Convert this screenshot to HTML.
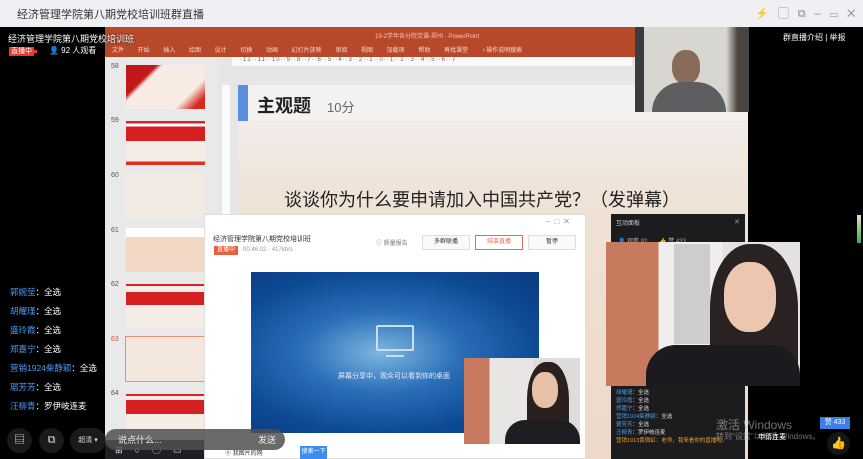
<!DOCTYPE html>
<html><head><meta charset="utf-8"><style>
*{margin:0;padding:0;box-sizing:border-box}
body{width:863px;height:459px;overflow:hidden;position:relative;background:#000;font-family:"Liberation Sans","Noto Sans CJK SC",sans-serif}
.a{position:absolute}
.t{white-space:nowrap}
</style></head><body>
<!-- top bar -->
<div class="a" style="left:0;top:0;width:863px;height:27px;background:#eef0f3"></div>
<div class="a t" style="left:17px;top:6px;font-size:11px;color:#333">经济管理学院第八期党校培训班群直播</div>
<div class="a t" style="left:755px;top:5px;font-size:11px;color:#888;letter-spacing:9px">⚡▢⧉–▭✕</div>
<!-- PPT -->
<div class="a" style="left:105px;top:27px;width:643px;height:432px;background:#e6e6e6"></div>
<div class="a" style="left:105px;top:27px;width:643px;height:30px;background:#b8482a"></div>
<div class="a t" style="left:112px;top:45px;font-size:6px;color:#f6d8cc;word-spacing:12px">文件 开始 插入 绘图 设计 切换 动画 幻灯片放映 审阅 视图 加载项 帮助 再找课堂 ♀操作说明搜索</div>
<div class="a t" style="left:375px;top:31px;font-size:6px;color:#f0c8b8">19-2学年各分院党课-郑州 - PowerPoint</div>
<div class="a" style="left:105px;top:57px;width:113px;height:402px;background:#e9e9e9"></div>
<div class="a" style="left:232px;top:57px;width:400px;height:9px;background:#fafafa"></div>
<div class="a t" style="left:240px;top:57px;font-size:6px;color:#666;letter-spacing:1px">·12··11··10··9··8··7··6··5··4··3··2··1··0··1··2··3··4··5··6··7</div>
<div class="a" style="left:222px;top:85px;width:8px;height:374px;background:#fafafa"></div>
<!-- left black texts (over PPT) -->
<div class="a t" style="left:8px;top:32px;font-size:9px;color:#fff;text-shadow:0 0 2px #000">经济管理学院第八期党校培训班</div>
<div class="a t" style="left:9px;top:47px;font-size:7px;color:#fff;background:#e03c31;padding:0 2px;line-height:9px">直播中</div>
<div class="a" style="left:34px;top:50px;width:3px;height:3px;background:#e03c31"></div>
<div class="a t" style="left:49px;top:45px;font-size:8px;color:#fff">👤 92 人观看</div>
<!-- thumbnails -->
<div class="a t" style="left:111px;top:63px;font-size:7px;color:#555">58</div>
<div class="a" style="left:126px;top:65px;width:79px;height:44px;background:linear-gradient(135deg,#c2181a 0 25%,#f7ebe3 30% 75%,#d42a20 90%)"></div>
<div class="a t" style="left:111px;top:117px;font-size:7px;color:#555">59</div>
<div class="a" style="left:126px;top:121px;width:79px;height:44px;background:linear-gradient(#d62424 0 6%,#fff 6% 12%,#d42020 12% 45%,#f6ece6 45% 92%,#e03020 92%)"></div>
<div class="a t" style="left:111px;top:172px;font-size:7px;color:#555">60</div>
<div class="a" style="left:126px;top:174px;width:79px;height:44px;background:#f2ebe4"></div>
<div class="a t" style="left:111px;top:227px;font-size:7px;color:#555">61</div>
<div class="a" style="left:126px;top:228px;width:79px;height:44px;background:linear-gradient(#fff 0 20%,#f3d8c6 20%)"></div>
<div class="a t" style="left:111px;top:281px;font-size:7px;color:#555">62</div>
<div class="a" style="left:126px;top:284px;width:79px;height:44px;background:linear-gradient(#d62424 0 5%,#f5eee8 5% 18%,#d42020 18% 48%,#f6ece6 48%)"></div>
<div class="a t" style="left:111px;top:336px;font-size:7px;color:#d54">63</div>
<div class="a" style="left:125px;top:336px;width:81px;height:46px;border:1px solid #e89070;background:#f3e6dc"></div>
<div class="a t" style="left:111px;top:390px;font-size:7px;color:#555">64</div>
<div class="a" style="left:126px;top:394px;width:79px;height:44px;background:linear-gradient(#d62424 0 5%,#f5eee8 5% 14%,#d42020 14% 46%,#f6ece6 46%)"></div>
<!-- slide -->
<div class="a" style="left:238px;top:85px;width:510px;height:374px;background:linear-gradient(180deg,#f1ece8 0 12%,#efe2d6 30%,#eed9c9 100%)"></div>
<div class="a" style="left:238px;top:85px;width:510px;height:36px;background:#f4f2f0"></div>
<div class="a" style="left:238px;top:85px;width:10px;height:36px;background:#5a8fe0"></div>
<div class="a t" style="left:257px;top:92px;font-size:18px;color:#222;font-weight:bold">主观题</div>
<div class="a t" style="left:327px;top:97px;font-size:13px;color:#666">10分</div>
<div class="a t" style="left:284px;top:186px;font-size:18px;color:#222">谈谈你为什么要申请加入中国共产党？（发弹幕）</div>
<!-- teacher cam -->
<div class="a" style="left:635px;top:27px;width:114px;height:85px;background:linear-gradient(90deg,#3a3d3f 0 8%,#d8d6d0 8% 80%,#4a4440 90%)"></div>
<div class="a" style="left:672px;top:50px;width:28px;height:34px;border-radius:45%;background:#8a6a58"></div>
<div class="a" style="left:652px;top:82px;width:74px;height:30px;border-radius:30px 30px 0 0;background:#5e5e60"></div>
<!-- right panel -->
<div class="a t" style="left:783px;top:32px;font-size:8px;color:#fff">群直播介绍 | 举报</div>
<div class="a" style="left:857px;top:215px;width:4px;height:28px;background:linear-gradient(#ddd,#8c6,#3a8)"></div>
<!-- chat -->
<div class="a" style="left:10px;top:283px;font-size:8.5px;line-height:19px;color:#fff">
<div><span style="color:#4a9af0">郭婉莹</span>：全选</div>
<div><span style="color:#4a9af0">胡耀瑾</span>：全选</div>
<div><span style="color:#4a9af0">盛玲霞</span>：全选</div>
<div><span style="color:#4a9af0">郑嘉宁</span>：全选</div>
<div><span style="color:#4a9af0">营销1924柴静颖</span>：全选</div>
<div><span style="color:#4a9af0">琚芳芳</span>：全选</div>
<div><span style="color:#4a9af0">汪柳青</span>：罗伊岐连麦</div>
</div>
<div class="a" style="left:7px;top:428px;width:25px;height:25px;border-radius:50%;background:#1a1a1a;color:#ddd;font-size:11px;text-align:center;line-height:25px">▤</div>
<div class="a" style="left:39px;top:428px;width:25px;height:25px;border-radius:50%;background:#1a1a1a;color:#ddd;font-size:11px;text-align:center;line-height:25px">⧉</div>
<div class="a t" style="left:70px;top:428px;width:36px;height:25px;border-radius:13px;background:#1a1a1a;color:#ddd;font-size:7px;text-align:center;line-height:25px">超清 ▾</div>
<!-- taskbar -->
<div class="a" style="left:105px;top:440px;width:100px;height:19px;background:#1e1e24"></div>
<div class="a t" style="left:115px;top:443px;font-size:9px;color:#eee;letter-spacing:12px">⊞○◯▭</div>
<!-- dialog -->
<div class="a" style="left:204px;top:214px;width:382px;height:245px;background:#fff;border:1px solid #ddd"></div>
<div class="a t" style="left:546px;top:217px;font-size:8px;color:#999;letter-spacing:4px">–□✕</div>
<div class="a t" style="left:213px;top:234px;font-size:7px;color:#333">经济管理学院第八期党校培训班</div>
<div class="a t" style="left:214px;top:246px;font-size:6px;color:#fff;background:#e86040;padding:0 3px;line-height:9px">直播中</div>
<div class="a t" style="left:243px;top:247px;font-size:6px;color:#999">00:46:02 · 417kb/s</div>
<div class="a t" style="left:376px;top:238px;font-size:6px;color:#777">ⓘ 质量报告</div>
<div class="a" style="left:422px;top:235px;width:48px;height:15px;border:1px solid #ddd;background:#fafafa;font-size:6px;color:#333;text-align:center;line-height:13px">多群联播</div>
<div class="a" style="left:475px;top:235px;width:48px;height:15px;border:1px solid #e86a50;font-size:6px;color:#e86a50;text-align:center;line-height:13px">结束直播</div>
<div class="a" style="left:528px;top:235px;width:48px;height:15px;border:1px solid #ddd;background:#fafafa;font-size:6px;color:#333;text-align:center;line-height:13px">暂停</div>
<div class="a" style="left:251px;top:272px;width:288px;height:161px;background:radial-gradient(ellipse at 45% 50%,#7db6e0 0,#2a6fb8 35%,#0d4a94 70%,#0a3a80 100%)"></div>
<div class="a" style="left:376px;top:325px;width:38px;height:26px;border:2px solid #cde;border-radius:2px"></div>
<div class="a" style="left:386px;top:355px;width:18px;height:2px;background:#cde"></div>
<div class="a t" style="left:338px;top:371px;font-size:7px;color:#eef">屏幕分享中，观众可以看到你的桌面</div>
<!-- small girl cam -->
<div class="a" style="left:464px;top:358px;width:116px;height:86px;background:linear-gradient(90deg,#c77a60 0 22%,#e8e6e4 22% 60%,#dedcda 60%)"></div>
<div class="a" style="left:527px;top:362px;width:42px;height:82px;border-radius:45% 45% 0 0;background:#2a2020"></div>
<div class="a" style="left:532px;top:372px;width:26px;height:36px;border-radius:45%;background:#e8c0a8"></div>
<div class="a" style="left:505px;top:420px;width:75px;height:24px;border-radius:20px 20px 0 0;background:#1e1e22"></div>
<!-- send bar -->
<div class="a" style="left:105px;top:429px;width:180px;height:21px;border-radius:11px;background:rgba(80,80,80,.85)"></div>
<div class="a t" style="left:118px;top:433px;font-size:9px;color:#eee">说点什么...</div>
<div class="a t" style="left:258px;top:433px;font-size:9px;color:#eee">发送</div>
<div class="a t" style="left:225px;top:448px;font-size:6px;color:#333">ⓔ 我图片的网</div>
<div class="a" style="left:300px;top:446px;width:27px;height:13px;background:#3a8ef0;font-size:6px;color:#fff;text-align:center;line-height:13px">搜索一下</div>
<!-- interactive panel -->
<div class="a" style="left:611px;top:214px;width:134px;height:245px;background:#1c1c1e"></div>
<div class="a t" style="left:616px;top:218px;font-size:6px;color:#ccc">互动面板</div>
<div class="a t" style="left:734px;top:218px;font-size:7px;color:#999">✕</div>
<div class="a t" style="left:618px;top:236px;font-size:6px;color:#aaa">👤 观看 92 &nbsp;&nbsp;&nbsp;&nbsp;&nbsp; 👍 赞 433</div>
<div class="a" style="left:616px;top:389px;font-size:5.5px;line-height:8px;color:#ddd">
<div><span style="color:#4a9af0">胡耀瑾</span>：全选</div>
<div><span style="color:#4a9af0">盛玲霞</span>：全选</div>
<div><span style="color:#4a9af0">郑嘉宁</span>：全选</div>
<div><span style="color:#4a9af0">营销1924柴静颖</span>：全选</div>
<div><span style="color:#4a9af0">琚芳芳</span>：全选</div>
<div><span style="color:#4a9af0">汪柳青</span>：罗伊岐连麦</div>
<div style="color:#e8a020">营销1913黄佩虹：老师，我来看你的直播啦。</div>
</div>
<!-- big girl cam -->
<div class="a" style="left:606px;top:242px;width:194px;height:144px;background:linear-gradient(90deg,#c87a5e 0 27%,#efeeec 27% 60%,#e4e2e0 60%)"></div>
<div class="a" style="left:674px;top:244px;width:36px;height:100px;background:#cfcdcb"></div>
<div class="a" style="left:710px;top:244px;width:88px;height:142px;border-radius:45% 45% 0 0;background:#2a2222"></div>
<div class="a" style="left:724px;top:262px;width:52px;height:70px;border-radius:45%;background:#ecc6ae"></div>
<div class="a" style="left:646px;top:345px;width:154px;height:41px;border-radius:30px 30px 0 0;background:#1b1b1f"></div>
<!-- activate windows / bottom right -->
<div class="a t" style="left:716px;top:416px;font-size:12px;color:rgba(200,200,200,.55)">激活 Windows</div>
<div class="a t" style="left:716px;top:431px;font-size:8px;color:rgba(200,200,200,.55)">转到"设置"以激活 Windows。</div>
<div class="a t" style="left:758px;top:432px;font-size:7px;color:#fff">申请连麦</div>
<div class="a" style="left:820px;top:417px;width:30px;height:12px;background:#3b7fe8;font-size:7px;color:#fff;text-align:center;line-height:12px">赞 433</div>
<div class="a" style="left:827px;top:432px;width:23px;height:23px;border-radius:50%;background:#151515;color:#eee;font-size:12px;text-align:center;line-height:23px">👍</div>
</body></html>
